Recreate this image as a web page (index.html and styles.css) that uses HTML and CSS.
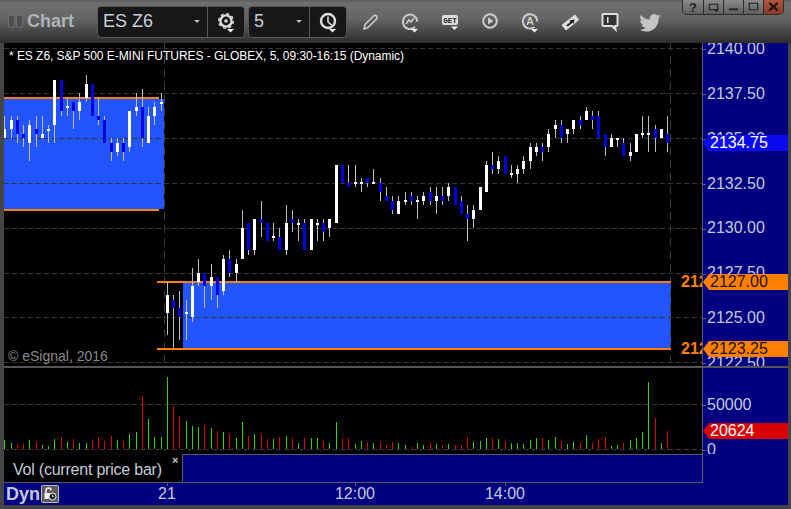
FILE: index.html
```html
<!DOCTYPE html>
<html lang="en">
<head>
<meta charset="utf-8">
<title>Chart</title>
<link rel="stylesheet" href="styles.css">
</head>
<body>
<div class="window">
  <header class="toolbar">
    <div class="grip"><span></span><span></span></div>
    <div class="title">Chart</div>
    <div class="combo combo-symbol">
      <div class="combo-field"><span>ES Z6</span><i class="caret"></i></div>
      <div class="combo-btn">
        <svg class="icon" viewBox="0 0 24 24"><circle cx="12" cy="11" r="5.600" fill="none" stroke="#ddd" stroke-width="2.400"/><circle cx="12" cy="11" r="7.300" fill="none" stroke="#ddd" stroke-width="1.500" stroke-dasharray="3 2.730"/><circle cx="12" cy="11" r="1.800" fill="#ddd"/><path d="M13 19h7l-3.500 3.500z" fill="#eee"/></svg>
      </div>
    </div>
    <div class="combo combo-interval">
      <div class="combo-field"><span>5</span><i class="caret"></i></div>
      <div class="combo-btn">
        <svg class="icon" viewBox="0 0 24 24"><circle cx="12" cy="11" r="7" fill="none" stroke="#ddd" stroke-width="2.400"/><path d="M12 6.500V12l3.500 3" fill="none" stroke="#ddd" stroke-width="1.600"/><path d="M13 19h7l-3.500 3.500z" fill="#eee"/></svg>
      </div>
    </div>
    <div class="tools">
      <svg class="icon" viewBox="0 0 24 24"><path d="M6 19l1-4.500 8.500-8.500a2 2 0 0 1 3 3L10 17.500z" fill="none" stroke="#ccc" stroke-width="1.600" stroke-linejoin="round"/></svg>
      <svg class="icon" viewBox="0 0 24 24"><path d="M17 17A7.200 7.200 0 1 1 19.200 11.500" fill="none" stroke="#ccc" stroke-width="2"/><path d="M8 14l3-4 2 2 3-4" fill="none" stroke="#ccc" stroke-width="1.500"/><path d="M13 19h7l-3.500 3.500z" fill="#eee"/></svg>
      <svg class="icon" viewBox="0 0 24 24"><rect x="4" y="5" width="16" height="10" rx="2" fill="#ddd"/><text x="12" y="13" class="get">GET</text><path d="M13 16.500h7l-3.500 3.500z" fill="#eee"/></svg>
      <svg class="icon" viewBox="0 0 24 24"><circle cx="12" cy="11" r="6.800" fill="none" stroke="#ccc" stroke-width="2"/><path d="M10 7.500l5.500 3.500-5.500 3.500z" fill="#ccc"/></svg>
      <svg class="icon" viewBox="0 0 24 24"><path d="M16.500 17A7.200 7.200 0 1 1 19.200 11.500" fill="none" stroke="#ccc" stroke-width="2"/><text x="12" y="15" class="auto">A</text><path d="M13 19h7l-3.500 3.500z" fill="#eee"/></svg>
      <svg class="icon" viewBox="0 0 24 24"><path d="M4 15L17 5l3.500 5L8 20z" fill="#ddd" stroke="#ddd" stroke-linejoin="round"/><path d="M8 15.500l4.500-3.500-1-1.500 5-1-1 4.500-1-1.300-4.500 3.500z" fill="#1c1c1c"/></svg>
      <svg class="icon" viewBox="0 0 24 24"><path d="M5.500 4h13a1 1 0 0 1 1 1v10a1 1 0 0 1-1 1H17l.5 3.500-3.500-3.500H5.500a1 1 0 0 1-1-1V5a1 1 0 0 1 1-1z" fill="#333" stroke="#ddd" stroke-width="2"/><path d="M9 7h1.500v6H9z" fill="#eee"/></svg>
      <svg class="icon" viewBox="-1.500 -2.500 27 27"><path d="M23.953 4.570a10 10 0 0 1-2.825.775 4.958 4.958 0 0 0 2.163-2.723c-.951.555-2.005.959-3.127 1.184a4.920 4.920 0 0 0-8.384 4.482C7.690 8.095 4.067 6.130 1.640 3.162a4.822 4.822 0 0 0-.666 2.475c0 1.710.870 3.213 2.188 4.096a4.904 4.904 0 0 1-2.228-.616v.060a4.923 4.923 0 0 0 3.946 4.827 4.996 4.996 0 0 1-2.212.085 4.936 4.936 0 0 0 4.604 3.417 9.867 9.867 0 0 1-6.102 2.105c-.390 0-.779-.023-1.170-.067a13.995 13.995 0 0 0 7.557 2.209c9.053 0 13.998-7.496 13.998-13.985 0-.210 0-.420-.015-.630A9.935 9.935 0 0 0 24 4.590z" fill="#c4c4c4"/></svg>
    </div>
    <div class="win-buttons">
      <div class="win-btn win-help">?</div>
      <div class="win-btn"><svg viewBox="0 0 20 15" class="win-icon"><path d="M5.500 4.500h9v6h-9z" fill="none" stroke="#222" stroke-width="1.200"/><path d="M10 10h6l-3 3z" fill="#222"/></svg></div>
      <div class="win-btn"><svg viewBox="0 0 20 15" class="win-icon"><path d="M5 9h10v2H5z" fill="#222"/></svg></div>
      <div class="win-btn"><svg viewBox="0 0 20 15" class="win-icon"><path d="M5.500 3.500h9v7h-9z" fill="none" stroke="#222" stroke-width="1.200"/></svg></div>
      <div class="win-btn win-close"><svg viewBox="0 0 20 15" class="win-icon"><path d="M5.500 3l9 8.500M14.500 3l-9 8.500" stroke="#2a1410" stroke-width="2.600"/></svg></div>
    </div>
  </header>

  <main class="panes">
    <section class="row row-price">
      <div class="plot">
        <svg id="price" class="canvas" viewBox="4 43 698 323" width="698" height="323">
          <rect class="zone" x="4" y="99" width="160" height="110"/>
          <rect class="zone" x="183" y="283" width="488" height="65"/>
          <g class="grid">
            <path d="M4 48.500H702M4 93.500H702M4 138.500H702M4 183.500H702M4 228.500H702M4 273.500H702M4 317.500H702M4 362.500H702"/>
          </g>
          <g class="grid grid-v"><path d="M164.500 43V366M670.500 43V366"/></g>
          <rect class="level" x="4" y="97" width="155" height="2"/>
          <rect class="level" x="4" y="209" width="155" height="2"/>
          <rect class="level" x="157" y="281" width="514" height="2"/>
          <rect class="level" x="157" y="348" width="514" height="2"/>
        </svg>
        <div class="study-title">* ES Z6, S&amp;P 500 E-MINI FUTURES - GLOBEX, 5, 09:30-16:15 (Dynamic)</div>
        <div class="copyright">© eSignal, 2016</div>
        <div class="level-label level-hi">2127.00</div>
        <div class="level-label level-lo">2123.25</div>
      </div>
      <div class="axis axis-price">
        <div class="tick">2140.00</div>
        <div class="tick">2137.50</div>
        <div class="tick">2135.00</div>
        <div class="tick">2132.50</div>
        <div class="tick">2130.00</div>
        <div class="tick">2127.50</div>
        <div class="tick">2125.00</div>
        <div class="tick">2122.50</div>
        <div class="tag tag-last">2134.75</div>
        <div class="tag tag-orange tag-hi">2127.00</div>
        <div class="tag tag-orange tag-lo">2123.25</div>
      </div>
    </section>

    <section class="row row-volume">
      <div class="plot">
        <svg id="volume" class="canvas" viewBox="4 368 698 86" width="698" height="86">
          <g class="grid"><path d="M4 404.500H702M4 449.500H702"/></g>
        </svg>
      </div>
      <div class="axis axis-volume">
        <div class="tick">50000</div>
        <div class="tick">0</div>
        <div class="tag tag-vol">20624</div>
      </div>
    </section>

    <section class="row row-legend">
      <div class="legend">
        <span>Vol (current price bar)</span>
        <span class="legend-close">×</span>
      </div>
      <div class="legend-fill"></div>
      <div class="axis"></div>
    </section>

    <footer class="time-axis">
      <div class="dyn">
        <span>Dyn</span>
        <svg class="lock" viewBox="0 0 18 18"><rect x=".5" y=".5" width="17" height="17" rx="1" fill="#5a5a5a" stroke="#b8b8b8"/><path d="M5 8V5.500a2.500 2.500 0 0 1 5 0" fill="none" stroke="#eee" stroke-width="1.500"/><rect x="3.500" y="8" width="7" height="6" fill="#eee"/><circle cx="11.500" cy="11.500" r="3.500" fill="#222" stroke="#eee"/><path d="M11.500 9.500v2h1.500" fill="none" stroke="#eee" stroke-width=".8"/></svg>
      </div>
      <div class="time time-21">21</div>
      <div class="time time-hour">12:00</div>
      <div class="time time-hour">14:00</div>
    </footer>
  </main>
</div>
<script src="app.js"></script>
</body>
</html>
```

FILE: styles.css
```css
* { box-sizing: border-box; }
html, body { margin: 0; padding: 0; background: #404040; }
body { width: 791px; height: 509px; overflow: hidden; font-family: "Liberation Sans", Arial, sans-serif; }

.window { width: 791px; height: 509px; display: flex; flex-direction: column; background: #454545; }

/* toolbar */
.toolbar {
  height: 43px; flex: none; display: flex; align-items: center; padding-left: 8px;
  background: linear-gradient(#5c5c5c 0, #6e6e6e 3px, #666 18px, #2d2d2d 43px);
}
.grip { display: flex; gap: 1px; width: 15px; }
.grip span { width: 7px; height: 13px; border: 1px solid #6e6e6e; border-radius: 2px; background: #4d4d4d; }
.title { width: 70px; margin-left: 4px; font-size: 18px; font-weight: 700; color: #aeb4ba; }
.combo {
  height: 32px; display: flex; background: #171717; border: 1px solid #585858; border-radius: 4px;
}
.combo-symbol { width: 148px; }
.combo-interval { width: 99px; margin-left: 3px; }
.combo-field {
  flex: 1; display: flex; align-items: center; justify-content: space-between;
  padding: 0 7px 0 5px; font-size: 18px; color: #c8d0dc;
}
.caret { width: 0; height: 0; border: 3px solid transparent; border-top: 3px solid #bbb; border-bottom: 0; }
.combo-btn { width: 37px; display: flex; align-items: center; justify-content: center; border-left: 1px solid #585858; }
.icon { width: 24px; height: 24px; display: block; flex: none; }
.tools { display: flex; gap: 16px; margin-left: 11px; }
.get { font: 700 7.5px "Liberation Mono", monospace; fill: #222; text-anchor: middle; }
.auto { font: 700 11px "Liberation Sans", sans-serif; fill: #ccc; text-anchor: middle; }
.win-buttons {
  display: flex; align-self: flex-start; margin-left: 20px; height: 15px;
  border: 1px solid #2e2e2e; border-top: 0; border-radius: 0 0 5px 5px; overflow: hidden;
  background: linear-gradient(#8a8a8a, #5f5f5f);
}
.win-btn {
  width: 20px; height: 14px; border-left: 1px solid #2e2e2e; display: flex; align-items: center; justify-content: center;
  font-size: 13px; font-weight: 700; color: #222;
}
.win-btn:first-child { border-left: 0; }
.win-close { background: linear-gradient(#b0563f, #8d3a2a); }
.win-icon { width: 20px; height: 14px; display: block; }

/* panes */
.panes { flex: none; width: 784px; height: 462px; margin-left: 4px; background: #000080; display: flex; flex-direction: column; }
.row { display: flex; flex: none; }
.row-price { height: 323px; }
.row-volume { height: 88px; border-top: 2px solid #565656; }
.row-legend { height: 28px; }
.plot { position: relative; width: 698px; flex: none; background: #000; overflow: hidden; }
.canvas { display: block; shape-rendering: crispEdges; }
.zone { fill: #2255ff; }
.level { fill: #ff8000; }
.grid path { fill: none; stroke: #363636; stroke-width: 1; stroke-dasharray: 5 3; }
.grid-v path { stroke: #3c3c3c; stroke-dasharray: 8 5; }
.wick { fill: #bdbdbd; }
.body-up { fill: #fff; }
.body-down { fill: #0000e6; }
.vol-up { fill: #33d400; }
.vol-down { fill: #e00000; }

.study-title { position: absolute; left: 5px; top: 6px; font-size: 12px; line-height: 14px; letter-spacing: -0.045px; color: #fff; white-space: nowrap; }
.copyright { position: absolute; left: 4px; top: 305px; font-size: 14px; line-height: 16px; color: #8a8a8a; white-space: nowrap; }
.level-label { position: absolute; left: 677px; width: 21px; height: 18px; overflow: hidden; font-size: 16px; font-weight: 700; line-height: 18px; color: #ff8000; }
.level-hi { top: 230px; }
.level-lo { top: 297px; }

/* axes */
.axis { position: relative; flex: 1; border-left: 1px solid #5a5a5a; background: #000080; color: #c6cad8; font-size: 16px; }
.axis-price { overflow: hidden; }
.axis-price .tick:first-child { margin-top: -16px; }
.axis-volume { padding-top: 14px; }
.tick { position: relative; height: 44.850px; line-height: 44.850px; padding-left: 4px; white-space: nowrap; }
.axis-volume .tick { height: 45px; line-height: 45px; }
.tick::before { content: ""; position: absolute; left: 0; top: 50%; width: 3px; height: 1px; background: #666; }
.tag {
  position: absolute; left: 0; right: 0; height: 16px; line-height: 16px; padding-left: 7px; color: #fff;
  clip-path: polygon(0 50%, 6px 0, 100% 0, 100% 100%, 6px 100%);
}
.tag-last { top: 92px; background: #0a0af0; }
.tag-orange { background: #ff8000; color: #1a1000; }
.tag-hi { top: 231px; }
.tag-lo { top: 298px; }
.tag-vol { top: 55px; background: #d90000; }

/* legend */
.legend { position: relative; width: 178px; flex: none; background: #000; padding-left: 9px; font-size: 16px; line-height: 32px; letter-spacing: -0.22px; color: #c6cad8; white-space: nowrap; }
.legend-close { position: absolute; left: 168px; top: -1px; font-size: 11px; line-height: 14px; font-weight: 700; color: #ccc; }
.legend-fill { width: 520px; flex: none; background: #000080; border-top: 1px solid #5a5a5a; border-left: 1px solid #5a5a5a; }
.row-legend .axis { border-left-color: #5a5a5a; }

/* time axis */
.time-axis { height: 23px; width: 699px; flex: none; display: flex; border-top: 1px solid #5a5a5a; color: #c6cad8; font-size: 16px; line-height: 22px; }
.dyn { width: 113px; flex: none; display: flex; align-items: center; gap: 1px; padding-left: 2px; font-size: 18px; font-weight: 700; color: #c6cad8; }
.lock { width: 18px; height: 18px; flex: none; display: block; }
.time { position: relative; text-align: center; flex: none; }
.time::before { content: ""; position: absolute; left: 50%; top: 0; width: 1px; height: 3px; background: #5a5a5a; }
.time-21 { width: 100px; margin-right: 63px; }
.time-hour { width: 150px; }
```

FILE: app.js
```js
// x, wickTop, wickBottom, bodyTop, bodyBottom, direction (1 = white, 0 = blue)
var candles = [
[4,116,138,129,138,1],[11,116,138,120,129,1],[17,116,143,120,134,0],[23,125,147,134,138,0],[29,120,161,125,143,1],
[36,116,147,129,134,0],[42,116,138,134,138,1],[48,125,143,129,131,1],[54,80,143,80,125,1],[61,80,116,80,111,0],
[67,98,116,106,108,1],[73,102,129,102,111,0],[79,93,120,102,111,1],[86,75,102,84,98,1],[92,84,116,84,116,0],
[98,98,125,116,120,0],[104,116,143,120,143,0],[111,138,161,143,152,0],[117,138,156,143,152,1],[123,138,161,143,152,0],
[129,111,152,111,147,1],[136,93,116,107,111,1],[142,89,147,107,138,0],[148,107,143,116,143,1],[154,102,125,107,116,1],
[161,93,111,102,104,1],
[167,282,335,295,313,1],[173,295,348,300,308,0],[179,291,340,308,317,0],[186,300,340,312,314,1],[192,268,322,286,317,1],
[198,259,286,273,282,1],[204,273,308,273,286,0],[211,264,300,277,286,1],[217,277,308,277,295,0],[223,255,295,259,291,1],
[229,250,277,259,273,0],[236,259,282,264,273,1],[242,210,259,228,259,1],[248,223,255,223,250,0],[254,219,255,219,250,1],
[261,201,237,219,223,0],[267,223,241,223,241,0],[273,223,241,236,238,1],[279,228,250,237,250,0],[286,205,255,223,250,1],
[292,210,232,219,223,0],[298,219,241,223,225,1],[304,219,250,223,250,0],[311,219,250,219,250,1],[317,219,241,223,225,1],
[323,219,241,223,232,0],[329,219,237,219,228,1],[336,165,223,165,223,1],[342,165,183,165,183,0],[348,165,187,183,187,0],
[355,165,187,182,184,1],[361,178,192,182,184,1],[367,178,187,178,183,0],[373,169,184,182,184,1],[380,178,201,183,192,0],
[386,187,201,196,201,0],[392,196,214,201,210,0],[398,196,214,201,214,1],[405,192,205,200,202,1],[411,192,205,196,201,0],
[417,196,219,200,202,1],[423,192,205,196,201,1],[430,187,205,192,201,0],[436,187,214,196,201,1],[442,187,205,196,201,0],
[448,183,201,187,196,1],[455,187,205,187,205,0],[461,196,214,201,214,0],[467,205,241,214,219,0],[473,205,228,210,219,1],
[480,187,210,187,210,1],[486,161,192,165,192,1],[492,152,174,165,169,0],[498,156,174,161,169,1],[505,156,174,156,174,0],
[511,165,178,173,175,1],[517,165,183,169,174,1],[523,156,174,161,169,1],[530,143,169,147,161,1],[536,143,156,147,152,1],
[542,143,161,147,152,0],[548,129,152,134,147,1],[555,120,138,125,129,1],[561,120,143,125,138,0],[567,129,143,129,134,1],
[573,120,134,120,129,1],[580,116,129,120,125,0],[586,107,120,111,120,1],[592,111,129,116,120,0],[598,111,138,116,138,0],
[605,134,156,134,147,0],[611,134,147,138,147,1],[617,138,147,138,140,1],[623,138,156,143,156,0],[630,143,161,152,156,1],
[636,134,152,134,152,1],[642,116,138,133,135,1],[648,116,152,133,135,1],[655,125,152,129,138,0],[661,129,138,129,138,1],
[667,116,152,134,143,0]
];

// x, top of bar, direction (1 = green, 0 = red)
var volumes = [
[4,440,1],[11,443,1],[17,444,0],[23,444,0],[29,440,1],[36,442,0],[42,445,1],[48,446,1],[54,439,1],[61,437,0],
[67,442,1],[73,439,0],[79,443,1],[86,443,1],[92,440,0],[98,437,0],[104,441,0],[111,436,0],[117,440,1],[123,441,0],
[129,434,1],[136,432,1],[142,396,0],[148,419,1],[154,437,1],[161,437,1],[167,377,1],[173,406,0],[179,416,0],[186,421,1],
[192,426,1],[198,427,1],[204,425,0],[211,428,1],[217,431,0],[223,432,1],[229,434,0],[236,438,1],[242,422,1],[248,436,0],
[254,434,1],[261,434,0],[267,439,0],[273,439,1],[279,437,0],[286,436,1],[292,438,0],[298,443,1],[304,438,0],[311,438,1],
[317,438,1],[323,441,0],[329,443,1],[336,422,1],[342,438,0],[348,438,0],[355,444,1],[361,441,1],[367,442,0],[373,443,1],
[380,442,0],[386,445,0],[392,442,0],[398,443,1],[405,445,1],[411,447,0],[417,443,1],[423,445,1],[430,443,0],[436,444,1],
[442,445,0],[448,444,1],[455,445,0],[461,445,0],[467,437,0],[473,442,1],[480,441,1],[486,438,1],[492,438,0],[498,439,1],
[505,441,0],[511,443,1],[517,443,1],[523,444,1],[530,440,1],[536,438,1],[542,438,0],[548,440,1],[555,437,1],[561,441,0],
[567,444,1],[573,442,1],[580,443,0],[586,435,1],[592,443,0],[598,439,0],[605,437,0],[611,446,1],[617,445,1],[623,443,0],
[630,440,1],[636,438,1],[642,432,1],[648,382,1],[655,418,0],[661,443,1],[667,431,0]
];

var NS = "http://www.w3.org/2000/svg";

function bar(parent, cls, x, y, w, h) {
  var r = document.createElementNS(NS, "rect");
  r.setAttribute("class", cls);
  r.setAttribute("x", x);
  r.setAttribute("y", y);
  r.setAttribute("width", w);
  r.setAttribute("height", h);
  parent.appendChild(r);
}

var price = document.getElementById("price");
candles.forEach(function (c) {
  bar(price, "wick", c[0], c[1], 1, c[2] - c[1]);
  var left = Math.max(c[0] - 1, 4);
  bar(price, c[5] ? "body-up" : "body-down", left, c[3], c[0] + 2 - left, c[4] - c[3]);
});

var volume = document.getElementById("volume");
volumes.forEach(function (v) {
  bar(volume, v[2] ? "vol-up" : "vol-down", v[0], v[1], 1, 449 - v[1]);
});
```
